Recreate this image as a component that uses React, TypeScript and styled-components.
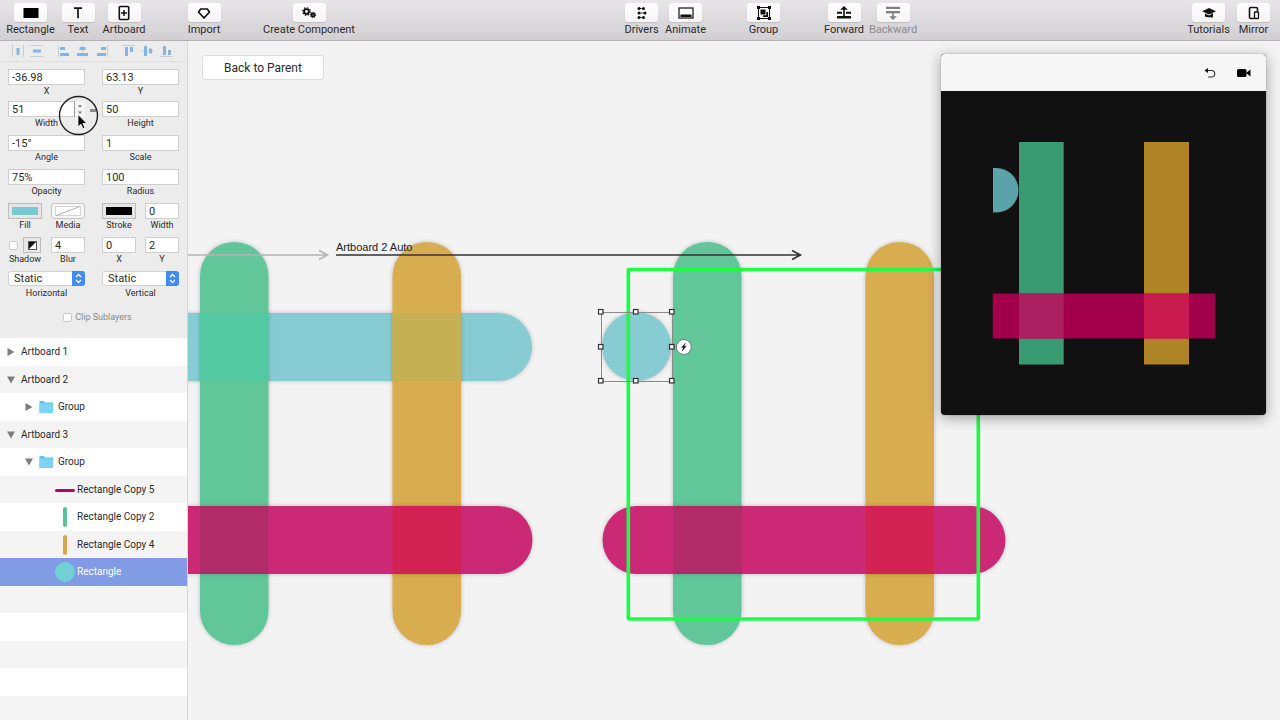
import React, { ReactNode } from 'react';
import styled, { createGlobalStyle } from 'styled-components';

const Global = createGlobalStyle`
  * { box-sizing: border-box; }
  body {
    margin: 0;
    font-family: Roboto, Inter, sans-serif;
    color: #2b2b2b;
    background: #f3f3f3;
  }
  button, input, select { font-family: inherit; color: inherit; margin: 0; }
  button { padding: 0; border: 0; background: none; }
`;

const Shell = styled.div`
  display: flex;
  flex-direction: column;
  height: 100vh;
  overflow: hidden;
`;

/* ---------- toolbar ---------- */

const Toolbar = styled.header`
  display: flex;
  justify-content: space-between;
  flex: none;
  height: 41px;
  padding: 3px 4px 0 6px;
  background: linear-gradient(#e7e5e7, #d1cfd1);
  border-bottom: 1px solid #b4b2b4;
`;

const Cluster = styled.div<{ $gap?: number; $after?: number }>`
  display: flex;
  gap: ${(p) => p.$gap ?? 0}px;
  margin-right: ${(p) => p.$after ?? 0}px;
`;

const ToolButton = styled.button<{ $width: number }>`
  display: flex;
  flex-direction: column;
  align-items: center;
  width: ${(p) => p.$width}px;
  font-size: 11px;
  line-height: 16px;
  white-space: nowrap;
  &:disabled { color: #8c8a8c; }
`;

const Tile = styled.span`
  display: flex;
  align-items: center;
  justify-content: center;
  width: 33px;
  height: 19px;
  border-radius: 3px;
  background: linear-gradient(#fdfdfd, #f6f6f6);
  box-shadow: 0 1px 1px rgba(0, 0, 0, 0.12);
`;

const toolIcons: Record<string, ReactNode> = {
  Rectangle: <rect x="2.500" y="5" width="15" height="10" fill="#000" />,
  Text: <path d="M6 5.200h8M10 5.200v10" stroke="#111" strokeWidth="1.700" fill="none" />,
  Artboard: (
    <g fill="none" stroke="#111">
      <rect x="5.300" y="3.500" width="9.400" height="13" rx="1" strokeWidth="1.600" />
      <path d="M10 7v6M7 10h6" strokeWidth="1.500" />
    </g>
  ),
  Import: <path d="M6.700 6h6.600l2.200 3L10 15 4.500 9z" fill="none" stroke="#111" strokeWidth="1.700" strokeLinejoin="round" />,
  'Create Component': (
    <g fill="none" stroke="#111">
      <circle cx="7.500" cy="8.500" r="2.400" strokeWidth="1.900" />
      <circle cx="7.500" cy="8.500" r="3.800" strokeWidth="1.200" strokeDasharray="1.500 1.480" />
      <circle cx="14" cy="12" r="1.500" strokeWidth="1.900" />
      <circle cx="14" cy="12" r="2.700" strokeWidth="1" strokeDasharray="1.200 .92" />
    </g>
  ),
  Drivers: (
    <g fill="#111">
      <path d="M7 5.500h5M7 10h7M7 14.500h5" stroke="#111" strokeWidth=".8" />
      <circle cx="7" cy="5.500" r="1.500" /><circle cx="7" cy="10" r="1.500" /><circle cx="7" cy="14.500" r="1.500" />
      <circle cx="11.500" cy="5.500" r="1.500" /><circle cx="13" cy="10" r="1.500" /><circle cx="11.500" cy="14.500" r="1.500" />
    </g>
  ),
  Animate: (
    <g>
      <rect x="3" y="5" width="14" height="10" fill="none" stroke="#222" strokeWidth="1.300" />
      <rect x="4.500" y="11.500" width="11" height="2.500" fill="#111" />
    </g>
  ),
  Group: (
    <g fill="#111">
      <rect x="4.500" y="4.500" width="11" height="11" fill="none" stroke="#111" strokeWidth="1" />
      <rect x="3" y="3" width="3" height="3" /><rect x="14" y="3" width="3" height="3" />
      <rect x="3" y="14" width="3" height="3" /><rect x="14" y="14" width="3" height="3" />
      <rect x="6.500" y="6.500" width="5" height="5" />
      <path d="M12.300 9h1.700v5H9v-1.700h3.300z" />
    </g>
  ),
  Forward: (
    <g fill="#111">
      <path d="M10 3l3.800 3.800H6.200z" />
      <rect x="9.200" y="6" width="1.600" height="7" />
      <path d="M3 8.800h5v2H3zM12 8.800h5v2h-5zM3 13h14v2.500H3z" />
    </g>
  ),
  Backward: (
    <g fill="#808080">
      <path d="M3 3.800h14v2.200H3zM3 8h14v2.200H3z" />
      <rect x="9.200" y="9" width="1.600" height="5" />
      <path d="M10 17l3.800-3.800H6.200z" />
    </g>
  ),
  Tutorials: (
    <g fill="#111">
      <path d="M10 5l7 3.200-7 3.200-7-3.200z" />
      <path d="M6 10.600l4 1.800 4-1.800v2.600c-1 1.400-7 1.400-8 0z" />
      <path d="M13 10v5" stroke="#111" strokeWidth="1" />
    </g>
  ),
  Mirror: (
    <g fill="none" stroke="#111" strokeWidth="1.600">
      <path d="M10 15.500H6.800A1.300 1.300 0 0 1 5.500 14.200V5.800A1.300 1.300 0 0 1 6.800 4.500h5.400A1.300 1.300 0 0 1 13.500 5.800V8" />
      <rect x="10.500" y="9" width="4" height="6.500" rx=".5" strokeWidth="1.300" />
    </g>
  ),
};

const Tool = ({ name, width, disabled }: { name: string; width: number; disabled?: boolean }) => (
  <ToolButton $width={width} disabled={disabled}>
    <Tile>
      <svg width="20" height="20" viewBox="0 0 20 20" aria-hidden="true">{toolIcons[name]}</svg>
    </Tile>
    {name}
  </ToolButton>
);

/* ---------- inspector ---------- */

const Workspace = styled.div`
  display: flex;
  flex: 1;
  min-height: 0;
`;

const Sidebar = styled.aside`
  display: flex;
  flex-direction: column;
  flex: none;
  width: 188px;
  background: #ececec;
  border-right: 1px solid #d6d6d6;
`;

const AlignBar = styled.div`
  display: flex;
  flex: none;
  height: 21px;
  align-items: center;
  padding-left: 8px;
  border-bottom: 1px solid #dfdfdf;
`;

const AlignButton = styled.button<{ $spaced?: boolean }>`
  display: flex;
  justify-content: center;
  width: 19px;
  margin-left: ${(p) => (p.$spaced ? 8 : 0)}px;
`;

const alignIcons: { label: string; spaced?: boolean; lines: string; bars: string }[] = [
  { label: 'Distribute horizontally', lines: 'M1.500 1v12M12.500 1v12', bars: 'M5.500 4h3v7h-3z' },
  { label: 'Distribute vertically', lines: 'M0 1.500h13M0 12.500h13', bars: 'M3 5.500h8v3H3z' },
  { label: 'Align left', spaced: true, lines: 'M1.500 1v12', bars: 'M3 3h5v3H3zM3 9h9v3H3z' },
  { label: 'Align centre', lines: 'M6.500 1v12', bars: 'M3.500 3h6v3h-6zM1 9h11v3H1z' },
  { label: 'Align right', lines: 'M12.500 1v12', bars: 'M6 3h5v3H6zM2 9h9v3H2z' },
  { label: 'Align top', spaced: true, lines: 'M0 1.500h13', bars: 'M3 3h3v9H3zM8 3h3v5H8z' },
  { label: 'Align middle', lines: 'M0 7h13', bars: 'M3 2h3v10H3zM8 4.500h3v5H8z' },
  { label: 'Align bottom', lines: 'M0 12.500h13', bars: 'M3 2h3v9H3zM8 6h3v5H8z' },
];

const Fields = styled.form`
  flex: none;
  padding: 7px 8px 13px;
`;

const Row = styled.div<{ $gap?: number }>`
  display: flex;
  justify-content: space-between;
  margin-bottom: ${(p) => p.$gap ?? 6}px;
`;

const Half = styled.div`
  position: relative;
  display: flex;
  justify-content: space-between;
  width: 77px;
`;

const FieldBox = styled.label<{ $width?: number }>`
  display: flex;
  flex-direction: column;
  align-items: center;
  width: ${(p) => p.$width ?? 77}px;
  font-size: 9px;
  line-height: 12px;
  white-space: nowrap;
`;

const Input = styled.input`
  width: 100%;
  height: 16px;
  padding: 0 3px;
  border: 1px solid #cfcfcf;
  border-radius: 0;
  background: #fff;
  font-size: 11px;
  outline: none;
`;

const Swatch = styled.button<{ $color: string }>`
  width: 34px;
  height: 16px;
  padding: 3px;
  border: 1px solid #bdbdbd;
  background: ${(p) => p.$color} content-box, #e6e6e6;
`;

const MediaWell = styled.button`
  width: 34px;
  height: 16px;
  border: 1px solid #c4c4c4;
  border-radius: 3px;
  background: #f6f6f6;
  svg { display: block; margin: 2px auto; }
`;

const ShadowControls = styled.span`
  display: flex;
  align-items: center;
  gap: 5px;
  height: 16px;
`;

const Check = styled.input`
  appearance: none;
  width: 9px;
  height: 9px;
  border: 1px solid #cbcbcb;
  border-radius: 2px;
  background: #fff;
`;

const ShadowWell = styled.button`
  display: flex;
  align-items: center;
  justify-content: center;
  width: 18px;
  height: 16px;
  border: 1px solid #bdbdbd;
  background: #e8e8e8;
`;

const SelectWrap = styled.span`
  position: relative;
  display: block;
  width: 100%;
  height: 15px;
  margin-bottom: 1px;
  svg { position: absolute; top: 0; right: 0; pointer-events: none; }
`;

const Select = styled.select`
  appearance: none;
  display: block;
  width: 100%;
  height: 15px;
  padding: 0 5px;
  border: 1px solid #d2d2d2;
  border-radius: 3px;
  background: #fff;
  font-size: 11px;
  line-height: 13px;
`;

const ClipLabel = styled.label`
  display: flex;
  align-items: center;
  justify-content: center;
  gap: 3px;
  height: 16px;
  margin-top: 10px;
  padding-left: 8px;
  color: #8a8a8a;
  font-size: 9px;
`;

const Stepper = styled.span`
  position: absolute;
  top: 0;
  right: 0;
  svg { display: block; }
`;

const LinkMark = styled.span`
  position: absolute;
  top: 8px;
  left: 82px;
  width: 6px;
  height: 3px;
  background: #8b8b8b;
`;

const Pointer = styled.svg`
  position: absolute;
  top: -7px;
  left: 50px;
  z-index: 2;
  pointer-events: none;
`;

const Field = ({ label, value, width, name }: { label: string; value: string; width?: number; name?: string }) => (
  <FieldBox $width={width}>
    <Input defaultValue={value} aria-label={name} />
    {label}
  </FieldBox>
);

const Dropdown = ({ label }: { label: string }) => (
  <FieldBox>
    <SelectWrap>
      <Select defaultValue="Static">
        <option>Static</option>
        <option>Dynamic</option>
      </Select>
      <svg width="13" height="15" viewBox="0 0 13 15" aria-hidden="true">
        <path d="M0 0h10a3 3 0 0 1 3 3v9a3 3 0 0 1-3 3H0z" fill="#3f8df0" />
        <path d="M4 6L6.500 3.500 9 6M4 9L6.500 11.500 9 9" fill="none" stroke="#fff" strokeWidth="1.300" />
      </svg>
    </SelectWrap>
    {label}
  </FieldBox>
);

/* ---------- layer tree ---------- */

const Tree = styled.ul`
  flex: 1;
  min-height: 0;
  margin: 0;
  padding: 0;
  list-style: none;
  overflow: hidden;
  background: repeating-linear-gradient(#fff 0 28px, #f4f4f4 28px 55px);
`;

const Layer = styled.li<{ $depth: number; $selected?: boolean }>`
  display: flex;
  align-items: center;
  height: 28px;
  padding-left: ${(p) => p.$depth}px;
  font-size: 10px;
  line-height: 12px;
  color: ${(p) => (p.$selected ? '#fff' : 'inherit')};
  background: ${(p) => (p.$selected ? '#819ce5' : 'none')};
  &:nth-child(even) { height: 27px; }
`;

const Disclosure = styled.button`
  display: flex;
  width: 14px;
`;

const FolderIcon = styled.svg`
  margin: 0 2px 0 -2px;
`;

const Thumb = styled.span`
  display: flex;
  width: 22px;
`;

const Triangle = ({ open, name }: { open?: boolean; name: string }) => (
  <Disclosure aria-label={`Toggle ${name}`} aria-expanded={!!open}>
    <svg width="8" height="8" viewBox="0 0 8 8">
      <path d={open ? 'M0 .5h8l-4 7z' : 'M.5 0v8l7-4z'} fill="#7d7d7d" />
    </svg>
  </Disclosure>
);

const Folder = () => (
  <FolderIcon width="19" height="14" viewBox="0 0 19 14" aria-hidden="true">
    <path d="M2.500 1h4.500l1 1.500h8V13H2.500z" fill="#63c1e6" />
    <path d="M2.500 3.500h13.500V13H2.500z" fill="#7dd3f3" />
  </FolderIcon>
);

/* ---------- canvas ---------- */

const Canvas = styled.main`
  position: relative;
  flex: 1;
  min-width: 0;
  overflow: hidden;
  background: #f3f3f3;
`;

const Artwork = styled.svg`
  position: absolute;
  inset: 0;
  width: 100%;
  height: 100%;
  .shadow { filter: drop-shadow(0 0 2px rgba(0, 0, 0, 0.22)); }
  text { font: 11px 'Liberation Sans', Arial, sans-serif; fill: #222; }
`;

const BackButton = styled.button`
  position: absolute;
  top: 14px;
  left: 14px;
  width: 122px;
  height: 25px;
  border: 1px solid #dcdcdc;
  border-radius: 3px;
  background: #fff;
  font-size: 12px;
  line-height: 22px;
`;

const Preview = styled.section`
  position: absolute;
  top: 13px;
  right: 14px;
  width: 325px;
  border-radius: 4px;
  overflow: hidden;
  background: #111;
  box-shadow: 0 0 1px rgba(0, 0, 0, 0.6), 0 3px 14px rgba(0, 0, 0, 0.35);
`;

const PreviewBar = styled.div`
  display: flex;
  align-items: center;
  justify-content: flex-end;
  gap: 18px;
  height: 37px;
  padding-right: 13px;
  background: #f6f6f6;
  svg { display: block; }
`;

const PreviewStage = styled.svg`
  display: block;
  width: 100%;
`;

const handles = [[601, 312], [636, 312], [672, 312], [601, 347], [672, 347], [601, 381], [636, 381], [672, 381]];

const Drawing = () => (
  <Artwork role="img" aria-label="Canvas artwork">
    <g transform="translate(-188 -41)">
      <g className="shadow">
        <rect x="130" y="313" width="402" height="68" rx="34" fill="#86ccd2" />
      </g>
      <g className="shadow">
        <rect x="200" y="242" width="68.500" height="403" rx="34" fill="#62c69b" />
        <rect x="392.500" y="242" width="68.500" height="403" rx="34" fill="#d8ad50" />
      </g>
      <rect x="200" y="313" width="68.500" height="68" fill="#52c9a0" />
      <rect x="392.500" y="313" width="68.500" height="68" fill="#c5b054" />
      <rect className="shadow" x="130" y="506" width="402.500" height="68" rx="34" fill="#cb2975" />
      <rect x="200" y="506" width="68.500" height="68" fill="#b12b68" />
      <rect x="392.500" y="506" width="68.500" height="68" fill="#d32355" />

      <circle className="shadow" cx="636.500" cy="346.500" r="34.500" fill="#86ccd2" />
      <g className="shadow">
        <rect x="673" y="242" width="68.500" height="403" rx="34" fill="#62c69b" />
        <rect x="865.500" y="242" width="68.500" height="403" rx="34" fill="#d8ad50" />
      </g>
      <rect className="shadow" x="602.500" y="506" width="403" height="68" rx="34" fill="#cb2975" />
      <rect x="673" y="506" width="68.500" height="68" fill="#b12b68" />
      <rect x="865.500" y="506" width="68.500" height="68" fill="#d32355" />

      <g fill="none" strokeWidth="1.600">
        <path d="M188 255h139M319 250.500l8.500 4.500-8.500 4.500" stroke="#b4b4b4" />
        <path d="M336 255h464M792 250.500l8.500 4.500-8.500 4.500" stroke="#333" />
      </g>
      <text x="336" y="251">Artboard 2 Auto</text>

      <rect x="628.300" y="269.500" width="350" height="349.500" rx="1" fill="none" stroke="#22fb46" strokeWidth="3.600" />

      <rect x="601.500" y="312.500" width="71" height="69" fill="none" stroke="#8a8a8a" />
      {handles.map(([x, y]) => (
        <rect key={`${x}-${y}`} x={x - 2.5} y={y - 2.5} width="4.500" height="4.500" fill="#fff" stroke="#333" strokeWidth="1.200" />
      ))}
      <circle cx="683.800" cy="347" r="7.500" fill="#fff" stroke="#777" strokeWidth="1" />
      <path d="M685.500 343l-4 4.600h2l-1.500 3.600 4.300-4.900h-2.200z" fill="#111" stroke="#111" strokeWidth=".3" />
    </g>
  </Artwork>
);

export default function App() {
  return (
    <Shell>
      <Global />
      <Toolbar>
        <Cluster $gap={35}>
          <Cluster>
            <Tool name="Rectangle" width={49} />
            <Tool name="Text" width={46} />
            <Tool name="Artboard" width={46} />
          </Cluster>
          <Tool name="Import" width={44} />
          <Tool name="Create Component" width={96} />
        </Cluster>
        <Cluster $gap={34} $after={6}>
          <Cluster>
            <Tool name="Drivers" width={44} />
            <Tool name="Animate" width={44} />
          </Cluster>
          <Tool name="Group" width={44} />
          <Cluster>
            <Tool name="Forward" width={49} />
            <Tool name="Backward" width={49} disabled />
          </Cluster>
        </Cluster>
        <Cluster>
          <Tool name="Tutorials" width={45} />
          <Tool name="Mirror" width={45} />
        </Cluster>
      </Toolbar>

      <Workspace>
        <Sidebar>
          <AlignBar>
            {alignIcons.map((icon) => (
              <AlignButton key={icon.label} aria-label={icon.label} $spaced={icon.spaced}>
                <svg width="14" height="14" viewBox="0 0 14 14">
                  <path d={icon.lines} stroke="#c3cedb" fill="none" />
                  <path d={icon.bars} fill="#84b4e4" />
                </svg>
              </AlignButton>
            ))}
          </AlignBar>

          <Fields onSubmit={(e) => e.preventDefault()}>
            <Row $gap={4}>
              <Field label="X" value="-36.98" />
              <Field label="Y" value="63.13" />
            </Row>
            <Row>
              <Half>
                <Field label="Width" value="51" />
                <Stepper>
                  <svg width="11" height="16" viewBox="0 0 11 16" aria-hidden="true">
                    <path d="M0 0h11v16H0z" fill="#f4f4f4" />
                    <path d="M.5 0v16" stroke="#9a9a9a" />
                    <path d="M4 6l2-2.500L8 6zM4 10.500l2 2.500 2-2.500z" fill="#777" />
                  </svg>
                </Stepper>
                <LinkMark />
                <Pointer width="42" height="42" viewBox="0 0 42 42" aria-hidden="true">
                  <circle cx="20.500" cy="21.500" r="19" fill="none" stroke="#222" strokeWidth="1.400" />
                  <path d="M20 20.500v12.500l2.900-2.700 2 4.400 2-.9-2-4.300h4z" fill="#000" stroke="#fff" strokeWidth=".8" />
                </Pointer>
              </Half>
              <Field label="Height" value="50" />
            </Row>
            <Row>
              <Field label="Angle" value="-15°" />
              <Field label="Scale" value="1" />
            </Row>
            <Row>
              <Field label="Opacity" value="75%" />
              <Field label="Radius" value="100" />
            </Row>
            <Row>
              <Half>
                <FieldBox $width={34}>
                  <Swatch type="button" $color="linear-gradient(#79cad0, #79cad0)" />
                  Fill
                </FieldBox>
                <FieldBox $width={34}>
                  <MediaWell type="button">
                    <svg width="26" height="10" viewBox="0 0 26 10" aria-hidden="true">
                      <rect x=".5" y=".5" width="25" height="9" fill="#fff" stroke="#d4d4d4" />
                      <path d="M1 9.500L25 .5" stroke="#b0b0b0" />
                    </svg>
                  </MediaWell>
                  Media
                </FieldBox>
              </Half>
              <Half>
                <FieldBox $width={34}>
                  <Swatch type="button" $color="linear-gradient(#000, #000)" />
                  Stroke
                </FieldBox>
                <Field label="Width" value="0" width={34} name="Stroke width" />
              </Half>
            </Row>
            <Row>
              <Half>
                <FieldBox as="div" $width={34}>
                  <ShadowControls>
                    <Check id="shadow" type="checkbox" />
                    <ShadowWell type="button" aria-label="Shadow colour">
                      <svg width="9" height="9" viewBox="0 0 9 9">
                        <rect width="9" height="9" fill="#fff" />
                        <path d="M0 0h9L0 9z" fill="#111" />
                        <rect x=".5" y=".5" width="8" height="8" fill="none" stroke="#555" />
                      </svg>
                    </ShadowWell>
                  </ShadowControls>
                  <label htmlFor="shadow">Shadow</label>
                </FieldBox>
                <Field label="Blur" value="4" width={34} />
              </Half>
              <Half>
                <Field label="X" value="0" width={34} name="Shadow X" />
                <Field label="Y" value="2" width={34} name="Shadow Y" />
              </Half>
            </Row>
            <Row $gap={0}>
              <Dropdown label="Horizontal" />
              <Dropdown label="Vertical" />
            </Row>
            <ClipLabel>
              <Check type="checkbox" disabled />
              Clip Sublayers
            </ClipLabel>
          </Fields>

          <Tree>
            <Layer $depth={7}><Triangle name="Artboard 1" />Artboard 1</Layer>
            <Layer $depth={7}><Triangle open name="Artboard 2" />Artboard 2</Layer>
            <Layer $depth={25}><Triangle name="Group" /><Folder />Group</Layer>
            <Layer $depth={7}><Triangle open name="Artboard 3" />Artboard 3</Layer>
            <Layer $depth={25}><Triangle open name="Group" /><Folder />Group</Layer>
            {[
              ['Rectangle Copy 5', <rect x="0" y="9" width="20" height="3" rx="1.500" fill="#b3085c" />],
              ['Rectangle Copy 2', <rect x="8" y="0" width="4" height="20" rx="2" fill="#5cc09a" />],
              ['Rectangle Copy 4', <rect x="8" y="0" width="4" height="20" rx="2" fill="#d6a84b" />],
              ['Rectangle', <circle cx="10" cy="10" r="10" fill="#70d0d6" />],
            ].map(([name, shape]) => (
              <Layer key={name as string} $depth={55} $selected={name === 'Rectangle'}>
                <Thumb><svg width="20" height="20" viewBox="0 0 20 20" aria-hidden="true">{shape}</svg></Thumb>
                {name}
              </Layer>
            ))}
          </Tree>
        </Sidebar>

        <Canvas>
          <Drawing />
          <BackButton>Back to Parent</BackButton>
          <Preview>
            <PreviewBar>
              <button aria-label="Restart">
                <svg width="14" height="14" viewBox="0 0 14 14">
                  <path d="M2 4.500h6.500a3 3 0 0 1 0 6.500H5" fill="none" stroke="#333" strokeWidth="1.100" />
                  <path d="M5 2v5L1.500 4.500z" fill="#111" />
                </svg>
              </button>
              <button aria-label="Record">
                <svg width="18" height="14" viewBox="0 0 18 14">
                  <rect x="2" y="3" width="9.500" height="8" rx="1.500" />
                  <path d="M11 7l4.500-3.500v7z" />
                </svg>
              </button>
            </PreviewBar>
            <PreviewStage viewBox="941 91 325 324" role="img" aria-label="Prototype preview">
              <path d="M993 168h3.300a22.200 22.200 0 0 1 0 44.400H993z" fill="#5ca2a9" />
              <rect x="1019" y="142" width="44.700" height="222.500" fill="#399b71" />
              <rect x="1144" y="142" width="45" height="222.500" fill="#ae8427" />
              <rect x="992.700" y="293.500" width="222.500" height="45" fill="#a3004c" />
              <rect x="1019" y="293.500" width="44.700" height="45" fill="#aa2061" />
              <rect x="1144" y="293.500" width="45" height="45" fill="#c91a50" />
            </PreviewStage>
          </Preview>
        </Canvas>
      </Workspace>
    </Shell>
  );
}
